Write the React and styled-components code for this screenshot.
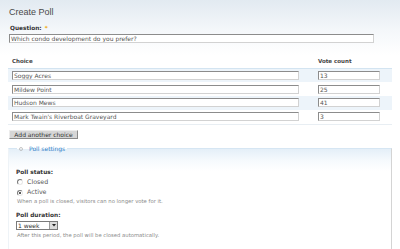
import React from "react";
import styled, { createGlobalStyle } from "styled-components";

const GlobalStyle = createGlobalStyle`
  html, body { margin: 0; padding: 0; }
  body {
    background: linear-gradient(to bottom, #e2eaf1 0px, #f4f7fa 30px, #ffffff 55px) no-repeat #ffffff;
    font-family: "DejaVu Sans", Verdana, sans-serif;
    color: #333;
    line-height: 1;
  }
`;

const Page = styled.div`
  width: 384px;
  padding: 7px 8px 0 8px;
`;

const Title = styled.h2`
  margin: 0 0 0 1px;
  font-family: "Liberation Sans", Arial, sans-serif;
  font-weight: normal;
  font-size: 9px;
  line-height: 11px;
  color: #4a4a4a;
`;

const Label = styled.div`
  font-size: 5.8px;
  font-weight: bold;
  line-height: 8px;
  color: #333;
  margin-top: ${(p) => p.$mt || 0}px;
  margin-left: ${(p) => p.$ml || 0}px;
`;

const Star = styled.span`
  color: #f0a500;
  margin-left: 3px;
`;

const TextInput = styled.div`
  box-sizing: border-box;
  width: ${(p) => p.$w}px;
  height: 9px;
  margin-left: ${(p) => p.$ml || 0}px;
  margin-top: ${(p) => p.$mt || 0}px;
  border: 1px solid;
  border-color: #8c8c8c #d2d2d2 #d2d2d2 #8c8c8c;
  background: #fff;
  font-size: 6px;
  line-height: 7px;
  padding: 0 1px;
  color: #555;
  white-space: nowrap;
  overflow: hidden;
`;

const Table = styled.table`
  margin-top: 12px;
  width: 384px;
  border-collapse: collapse;
  table-layout: fixed;
  border-bottom: 1px solid #e8eef3;
`;

const Th = styled.th`
  text-align: left;
  font-size: 5.5px;
  font-weight: bold;
  line-height: 7px;
  color: #444;
  padding: 3.5px 4px 2.5px 4px;
  border-bottom: 1px solid #d3e4f1;
`;

const Row = styled.tr`
  background: ${(p) => (p.$odd ? "#edf4fa" : "#ffffff")};
`;

const Td = styled.td`
  padding: 2.4px 4px;
`;

const Button = styled.div`
  box-sizing: border-box;
  display: flex;
  align-items: center;
  justify-content: center;
  margin: 5.5px 0 0 1px;
  width: 69px;
  height: 9px;
  background: #d6d6d6;
  border: 1px solid;
  border-color: #ececec #8a8a8a #8a8a8a #ececec;
  font-size: 6px;
  color: #333;
`;

const Fieldset = styled.fieldset`
  margin: 6px 0 0 0;
  padding: 0 7px 20px 7px;
  border: 1px solid;
  border-color: #d6e6f3 #d4d4d4 #d4d4d4 #eef3f7;
  background: linear-gradient(to bottom, #e4eff8 0px, #f6fafd 12px, #ffffff 22px);
`;

const Legend = styled.legend`
  margin-left: 1px;
  padding: 0 2px;
  display: flex;
  align-items: center;
  gap: 6px;
  font-size: 6px;
  line-height: 7px;
  color: #2f80c8;
`;

const RadioRow = styled.div`
  display: flex;
  align-items: center;
  gap: 4px;
  margin-top: ${(p) => p.$mt}px;
  margin-left: 1px;
  height: 8px;
  font-size: 6.3px;
  color: #555;
`;

const RadioDot = styled.span`
  box-sizing: border-box;
  position: relative;
  width: 6px;
  height: 6px;
  border-radius: 50%;
  border: 1px solid;
  border-color: #7a7a7a #e8e8e8 #e8e8e8 #7a7a7a;
  background: #fff;
  &::after {
    content: "";
    display: ${(p) => (p.$checked ? "block" : "none")};
    position: absolute;
    left: 1px;
    top: 1px;
    width: 2px;
    height: 2px;
    border-radius: 50%;
    background: #222;
  }
`;

const Description = styled.div`
  font-size: 5.3px;
  line-height: 7px;
  color: #8a8a8a;
  margin-top: ${(p) => p.$mt}px;
  margin-left: 1px;
`;

const Select = styled.div`
  box-sizing: border-box;
  display: flex;
  align-items: stretch;
  width: 42px;
  height: 9px;
  margin-top: 2.3px;
  border: 1px solid #7a7a7a;
  background: #fff;
`;

const SelectText = styled.span`
  flex: 1;
  font-size: 6px;
  line-height: 7px;
  padding-left: 1px;
  color: #333;
`;

const SelectArrow = styled.span`
  width: 7px;
  display: flex;
  align-items: center;
  justify-content: center;
  background: #dcdcdc;
  border-left: 1px solid #9a9a9a;
`;

const choices = [
  { name: "Soggy Acres", votes: "13" },
  { name: "Mildew Point", votes: "25" },
  { name: "Hudson Mews", votes: "41" },
  { name: "Mark Twain's Riverboat Graveyard", votes: "3" },
];

export default function App() {
  return (
    <>
      <GlobalStyle />
      <Page>
        <Title>Create Poll</Title>
        <Label $mt={6} $ml={2}>
          Question:<Star>*</Star>
        </Label>
        <TextInput $w={365} $ml={1} $mt={1.5}>
          Which condo development do you prefer?
        </TextInput>
        <Table>
          <colgroup>
            <col style={{ width: 306 }} />
            <col style={{ width: 78 }} />
          </colgroup>
          <thead>
            <tr>
              <Th>Choice</Th>
              <Th>Vote count</Th>
            </tr>
          </thead>
          <tbody>
            {choices.map((c, i) => (
              <Row key={c.name} $odd={i % 2 === 0}>
                <Td>
                  <TextInput $w={287}>{c.name}</TextInput>
                </Td>
                <Td>
                  <TextInput $w={62}>{c.votes}</TextInput>
                </Td>
              </Row>
            ))}
          </tbody>
        </Table>
        <Button>Add another choice</Button>
        <Fieldset>
          <Legend>
            <svg width="4" height="4" viewBox="0 0 4 4">
              <circle cx="2" cy="2" r="1.5" fill="none" stroke="#b5b5b5" strokeWidth="0.8" />
            </svg>
            Poll settings
          </Legend>
          <Label $mt={16}>Poll status:</Label>
          <RadioRow $mt={2}>
            <RadioDot />
            Closed
          </RadioRow>
          <RadioRow $mt={2.5}>
            <RadioDot $checked />
            Active
          </RadioRow>
          <Description $mt={1.5}>
            When a poll is closed, visitors can no longer vote for it.
          </Description>
          <Label $mt={5.7}>Poll duration:</Label>
          <Select>
            <SelectText>1 week</SelectText>
            <SelectArrow>
              <svg width="4" height="3" viewBox="0 0 4 3">
                <path d="M0 0 L4 0 L2 2.5 Z" fill="#222" />
              </svg>
            </SelectArrow>
          </Select>
          <Description $mt={2}>
            After this period, the poll will be closed automatically.
          </Description>
        </Fieldset>
      </Page>
    </>
  );
}
